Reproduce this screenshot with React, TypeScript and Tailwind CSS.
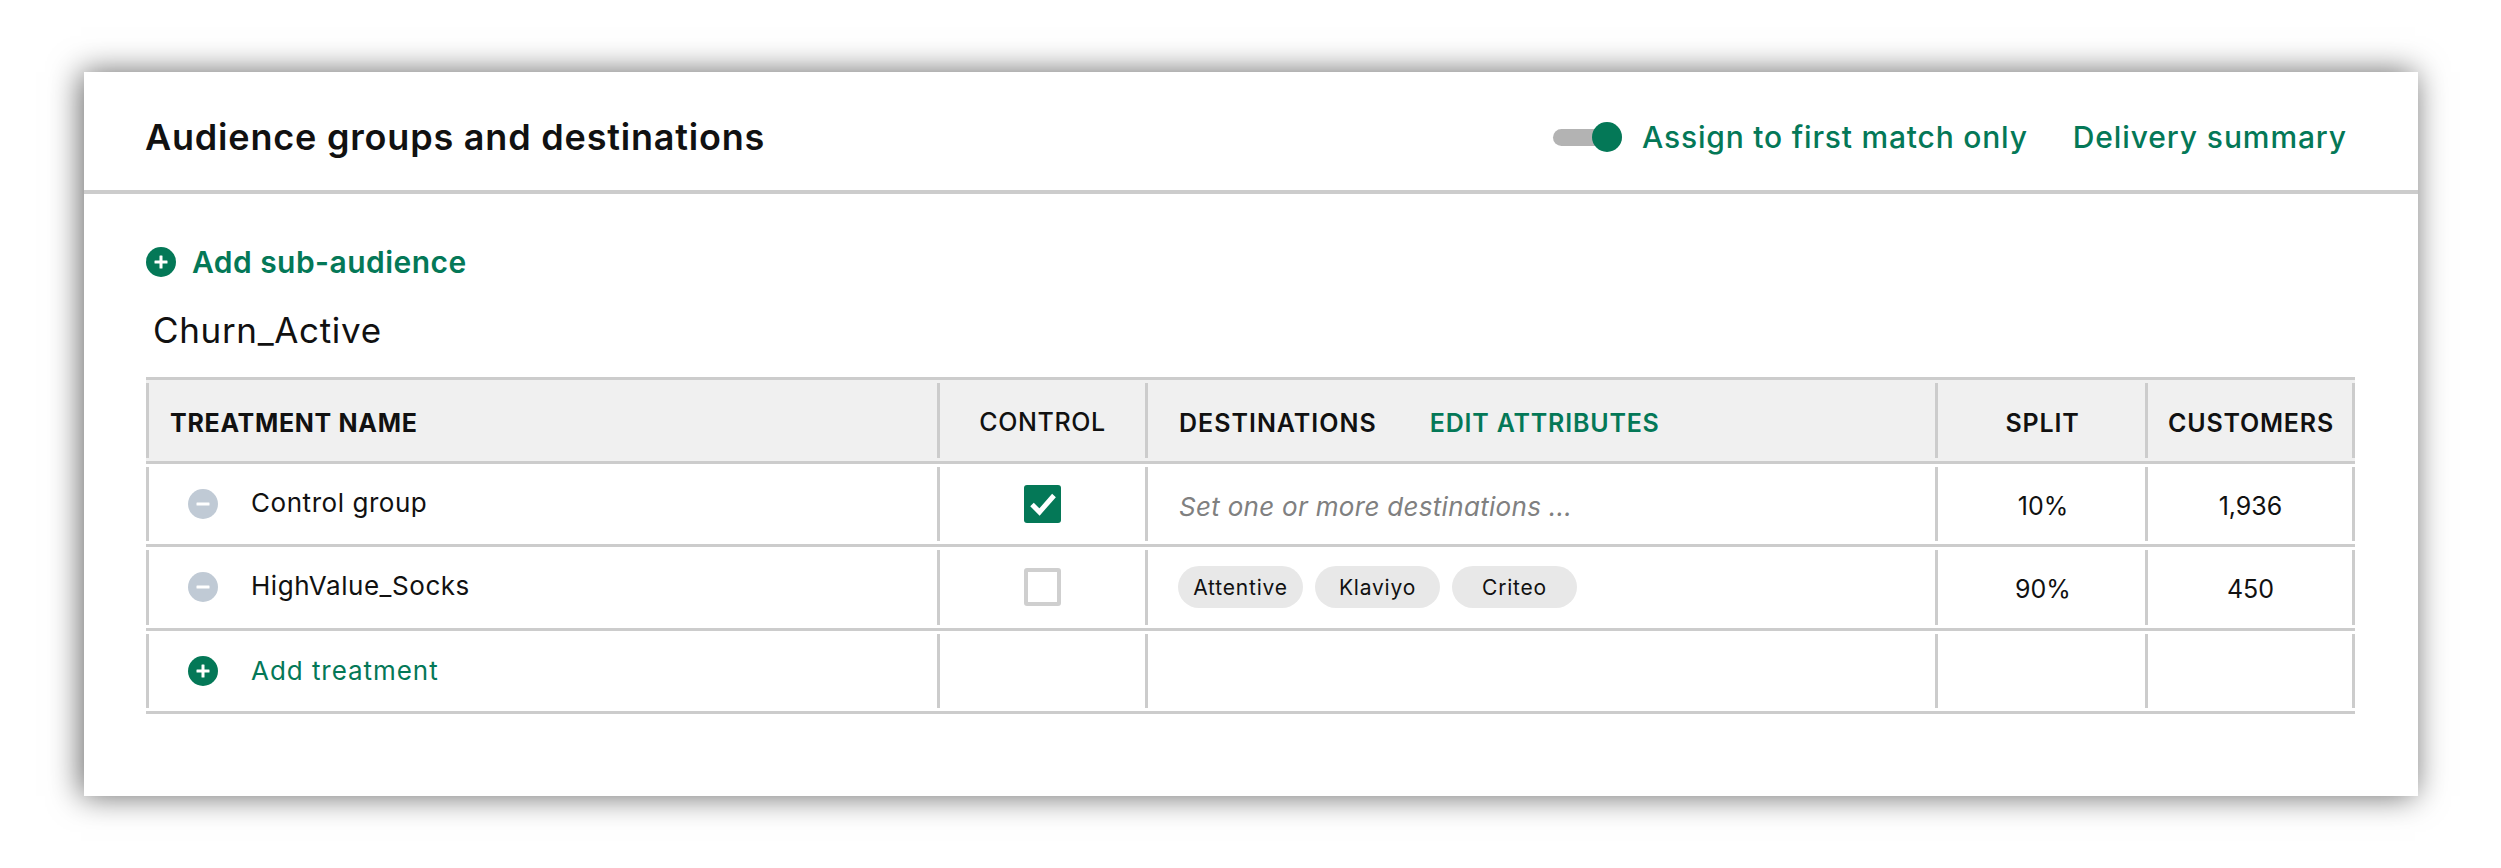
const rowGrid = 'grid grid-cols-[791px_208px_790px_210px_210px] w-[2209px] h-[83.5px] border-b-[3px] border-[#cccccc]';
const cellLine = 'my-[3px] border-l-[3px] border-[#cccccc]';

function RoundIcon({ kind, color }: { kind: 'plus' | 'minus'; color: string }) {
  return (
    <svg width="30" height="30" viewBox="0 0 30 30" className="shrink-0">
      <circle cx="15" cy="15" r="15" fill={color} />
      <rect x="8.5" y="13.5" width="13" height="3" rx="0.5" fill="#fff" />
      {kind === 'plus' && <rect x="13.5" y="8.5" width="3" height="13" rx="0.5" fill="#fff" />}
    </svg>
  );
}

function Checkbox({ checked }: { checked?: boolean }) {
  if (checked) {
    return (
      <div className="w-[37px] h-[38px] rounded-[3px] bg-[#047857] flex items-center justify-center">
        <svg width="30" height="26" viewBox="0 0 30 26" fill="none">
          <path d="M4 13.5 L11.5 21 L26 4.5" stroke="#fff" strokeWidth="5" />
        </svg>
      </div>
    );
  }
  return <div className="w-[37px] h-[38px] rounded-[3px] bg-white border-[4px] border-[#cfcfcf]" />;
}

function Chip({ label }: { label: string }) {
  return (
    <div className="h-[42px] w-[125px] rounded-full bg-[#e8e8e8] flex items-center justify-center text-[21px] tracking-[0.8px] text-[#111]">
      {label}
    </div>
  );
}

const headerText = 'pt-[6px] text-[25px] font-semibold tracking-[0.8px] text-[#111]';
const rowText = 'text-[26px] tracking-[0.55px] text-[#111]';
const numberText = 'pt-[5px] text-[25px] text-[#111]';

export default function App() {
  return (
    <div className="bg-white w-[2501px] h-[868px] pt-[72px] pl-[84px] overflow-hidden font-['Inter',sans-serif]">
      <div className="w-[2334px] h-[724px] bg-white shadow-[-3px_0_30px_rgba(0,0,0,0.6)]">
        <div className="h-[122px] border-b-4 border-[#cccccc] pt-[12px] pl-[61px] pr-[71px] flex items-center justify-between">
          <div className="text-[36px] font-semibold tracking-[0.8px] text-[#111]">Audience groups and destinations</div>
          <div className="flex items-center text-[#047857] text-[30px] font-medium tracking-[0.8px]">
            <div className="relative w-[69px] h-[17px] rounded-full bg-[#b3b3b3]">
              <div className="absolute right-0 top-[-6.5px] w-[30px] h-[30px] rounded-full bg-[#047857]" />
            </div>
            <div className="ml-[20px]">Assign to first match only</div>
            <div className="ml-[45px] tracking-[0.9px]">Delivery summary</div>
          </div>
        </div>

        <div className="pl-[62px]">
          <div className="mt-[53px] flex items-center h-[30px] text-[#047857] text-[30px] font-semibold tracking-[0.45px]">
            <RoundIcon kind="plus" color="#047857" />
            <div className="ml-[16px]">Add sub-audience</div>
          </div>
          <div className="mt-[33px] ml-[7px] h-[40px] leading-[40px] text-[35px] tracking-[0.66px] text-[#111]">Churn_Active</div>

          <div className="mt-[27px] border-t-[3px] border-[#cccccc] w-[2209px]">
            <div className={`${rowGrid} bg-[#f0f0f0]`}>
              <div className={`${cellLine} flex items-center pl-[21px] pt-[6px] text-[25px] font-bold tracking-[0.7px] text-[#111]`}>TREATMENT NAME</div>
              <div className={`${cellLine} flex items-center justify-center pt-[5px] text-[25px] font-medium tracking-[0.6px] text-[#111]`}>CONTROL</div>
              <div className={`${cellLine} flex items-center pl-[31px] ${headerText}`}>
                <span className="tracking-[1px]">DESTINATIONS</span>
                <span className="ml-[53px] text-[#047857]">EDIT ATTRIBUTES</span>
              </div>
              <div className={`${cellLine} flex items-center justify-center pl-[2px] ${headerText}`}>SPLIT</div>
              <div className={`${cellLine} border-r-[3px] flex items-center justify-center pl-[2px] ${headerText}`}>CUSTOMERS</div>
            </div>

            <div className={rowGrid}>
              <div className={`${cellLine} flex items-center pl-[39px] ${rowText}`}>
                <RoundIcon kind="minus" color="#c0cad5" />
                <span className="ml-[33px] -mt-[3px]">Control group</span>
              </div>
              <div className={`${cellLine} flex items-center justify-center`}>
                <Checkbox checked />
              </div>
              <div className={`${cellLine} flex items-center pl-[31px] pt-[5px] text-[26px] tracking-[0.3px] italic text-[#808080]`}>
                Set one or more destinations ...
              </div>
              <div className={`${cellLine} flex items-center justify-center pl-[3px] ${numberText}`}>10%</div>
              <div className={`${cellLine} border-r-[3px] flex items-center justify-center pl-[1px] ${numberText}`}>1,936</div>
            </div>

            <div className={rowGrid}>
              <div className={`${cellLine} flex items-center pl-[39px] ${rowText}`}>
                <RoundIcon kind="minus" color="#c0cad5" />
                <span className="ml-[33px] -mt-[3px]">HighValue_Socks</span>
              </div>
              <div className={`${cellLine} flex items-center justify-center`}>
                <Checkbox />
              </div>
              <div className={`${cellLine} flex items-center pl-[30px] gap-[12px]`}>
                <Chip label="Attentive" />
                <Chip label="Klaviyo" />
                <Chip label="Criteo" />
              </div>
              <div className={`${cellLine} flex items-center justify-center pl-[3px] ${numberText}`}>90%</div>
              <div className={`${cellLine} border-r-[3px] flex items-center justify-center pl-[1px] ${numberText}`}>450</div>
            </div>

            <div className={rowGrid}>
              <div className={`${cellLine} flex items-center pl-[39px] text-[26px] tracking-[0.95px] text-[#047857]`}>
                <RoundIcon kind="plus" color="#047857" />
                <span className="ml-[33px] -mt-[1px]">Add treatment</span>
              </div>
              <div className={cellLine} />
              <div className={cellLine} />
              <div className={cellLine} />
              <div className={`${cellLine} border-r-[3px]`} />
            </div>
          </div>
        </div>
      </div>
    </div>
  );
}
